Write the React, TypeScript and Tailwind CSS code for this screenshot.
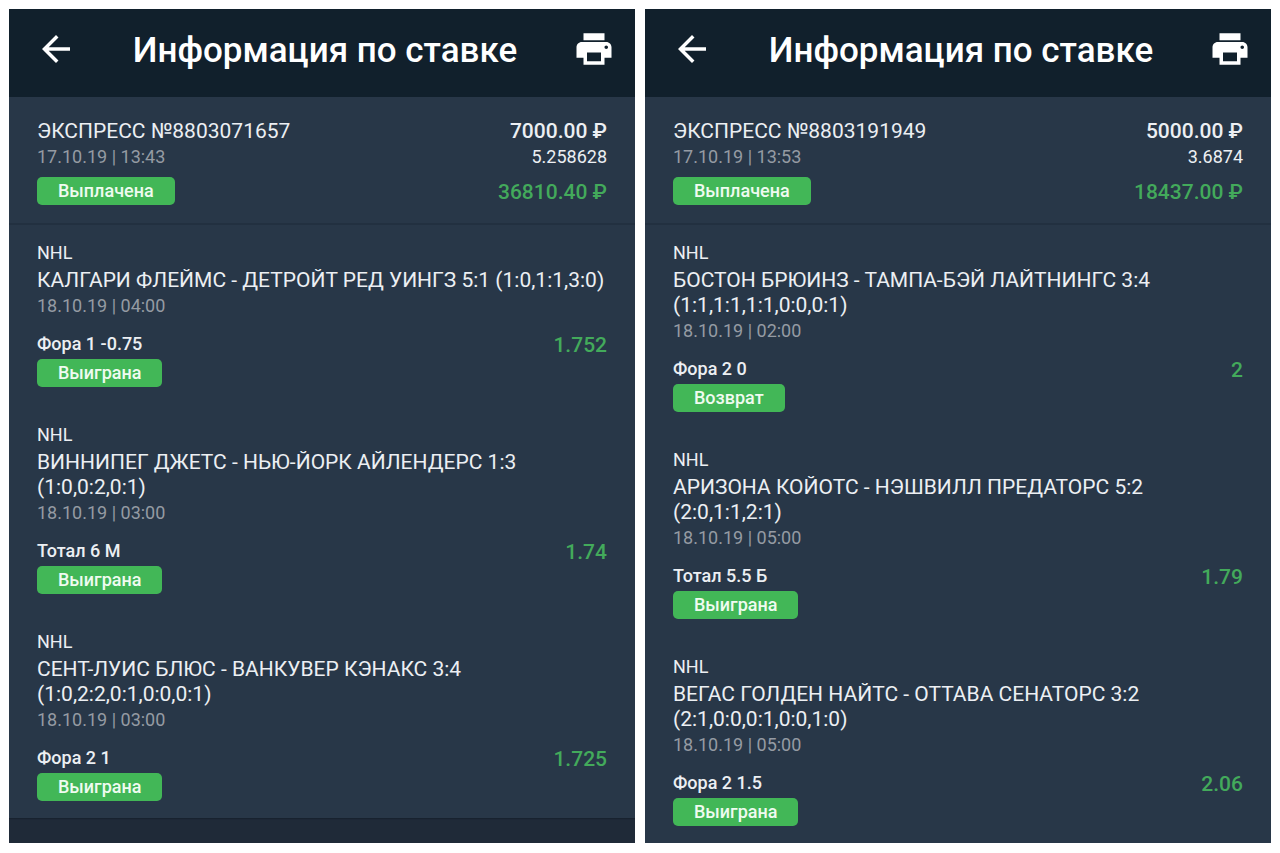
import { MdArrowBack, MdPrint } from "react-icons/md";

type Match = {
  teams: string;
  date: string;
  bet: string;
  status: string;
  odds: string;
};

type Bet = {
  id: string;
  date: string;
  stake: string;
  odds: string;
  payout: string;
  matches: Match[];
};

const bets: Bet[] = [
  {
    id: "8803071657",
    date: "17.10.19 | 13:43",
    stake: "7000.00 ₽",
    odds: "5.258628",
    payout: "36810.40 ₽",
    matches: [
      {
        teams: "КАЛГАРИ ФЛЕЙМС - ДЕТРОЙТ РЕД УИНГЗ 5:1 (1:0,1:1,3:0)",
        date: "18.10.19 | 04:00",
        bet: "Фора 1 -0.75",
        status: "Выиграна",
        odds: "1.752",
      },
      {
        teams: "ВИННИПЕГ ДЖЕТС - НЬЮ-ЙОРК АЙЛЕНДЕРС 1:3 (1:0,0:2,0:1)",
        date: "18.10.19 | 03:00",
        bet: "Тотал 6 М",
        status: "Выиграна",
        odds: "1.74",
      },
      {
        teams: "СЕНТ-ЛУИС БЛЮС - ВАНКУВЕР КЭНАКС 3:4 (1:0,2:2,0:1,0:0,0:1)",
        date: "18.10.19 | 03:00",
        bet: "Фора 2 1",
        status: "Выиграна",
        odds: "1.725",
      },
    ],
  },
  {
    id: "8803191949",
    date: "17.10.19 | 13:53",
    stake: "5000.00 ₽",
    odds: "3.6874",
    payout: "18437.00 ₽",
    matches: [
      {
        teams: "БОСТОН БРЮИНЗ - ТАМПА-БЭЙ ЛАЙТНИНГС 3:4 (1:1,1:1,1:1,0:0,0:1)",
        date: "18.10.19 | 02:00",
        bet: "Фора 2 0",
        status: "Возврат",
        odds: "2",
      },
      {
        teams: "АРИЗОНА КОЙОТС - НЭШВИЛЛ ПРЕДАТОРС 5:2 (2:0,1:1,2:1)",
        date: "18.10.19 | 05:00",
        bet: "Тотал 5.5 Б",
        status: "Выиграна",
        odds: "1.79",
      },
      {
        teams: "ВЕГАС ГОЛДЕН НАЙТС - ОТТАВА СЕНАТОРС 3:2 (2:1,0:0,0:1,0:0,1:0)",
        date: "18.10.19 | 05:00",
        bet: "Фора 2 1.5",
        status: "Выиграна",
        odds: "2.06",
      },
    ],
  },
];

function Badge({ children }: { children: string }) {
  return (
    <span className="inline-block rounded-[5px] bg-[#42b757] px-[21px] text-[18px] leading-[28px] font-medium text-[#effbf0]">
      {children}
    </span>
  );
}

function MatchItem({ match }: { match: Match }) {
  return (
    <li>
      <p className="text-[18px] leading-[24px]">NHL</p>
      <h2 className="mt-[3px] mb-px text-[21px] leading-[25px]">
        {match.teams}
      </h2>
      <p className="text-[18px] leading-[24px] text-[#959ba3]">{match.date}</p>
      <div className="mt-[14px] flex items-start justify-between">
        <p className="text-[18px] leading-[24px] font-medium">{match.bet}</p>
        <p className="text-[21px] leading-[26px] font-medium text-[#43aa5b]">
          {match.odds}
        </p>
      </div>
      <div className="mt-px flex">
        <Badge>{match.status}</Badge>
      </div>
    </li>
  );
}

function BetPanel({ bet }: { bet: Bet }) {
  return (
    <article className="overflow-hidden bg-[#1f2a38]">
      <header className="flex h-[88px] items-center justify-between bg-[#11202c] pr-5 pb-2 pl-[26px] text-white">
        <button type="button" aria-label="Назад">
          <MdArrowBack size={42} />
        </button>
        <h1 className="pt-1 text-[35px] leading-[44px] font-medium">
          Информация по ставке
        </h1>
        <button type="button" aria-label="Печать">
          <MdPrint size={42} />
        </button>
      </header>

      {/* Summary */}
      <section className="flex justify-between border-b-2 border-[#223040] bg-[#283748] px-7 pt-[21px] pb-4">
        <div>
          <p className="text-[21px] leading-[26px]">ЭКСПРЕСС №{bet.id}</p>
          <p className="mt-px mb-2 text-[18px] leading-[24px] text-[#959ba3]">
            {bet.date}
          </p>
          <div className="flex">
            <Badge>Выплачена</Badge>
          </div>
        </div>
        <div className="text-right">
          <p className="text-[21px] leading-[26px] font-medium">{bet.stake}</p>
          <p className="mt-px mb-2 text-[18px] leading-[24px]">{bet.odds}</p>
          <p className="text-[21px] leading-[30px] font-medium text-[#43aa5b]">
            {bet.payout}
          </p>
        </div>
      </section>

      {/* Matches */}
      <ul className="flex flex-col gap-9 bg-[#283748] px-7 pt-4 pb-[17px] shadow-[0_1px_1px_#18222f]">
        {bet.matches.map((match) => (
          <MatchItem key={match.teams} match={match} />
        ))}
      </ul>
    </article>
  );
}

export default function App() {
  return (
    <main className="grid grid-cols-2 gap-[10px] bg-white p-[9px] font-[Roboto,sans-serif] text-[#eceff3]">
      {bets.map((bet) => (
        <BetPanel key={bet.id} bet={bet} />
      ))}
    </main>
  );
}
